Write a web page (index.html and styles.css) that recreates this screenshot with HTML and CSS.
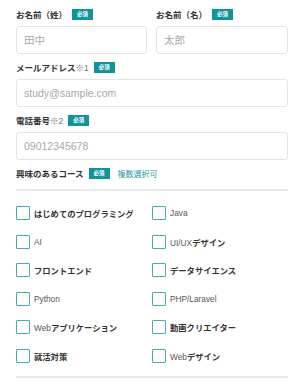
FILE: index.html
```html
<!DOCTYPE html>
<html lang="ja">
<head>
  <meta charset="UTF-8" />
  <meta name="viewport" content="width=device-width, initial-scale=1.0"/>
  <title>お申し込みフォーム</title>
  <link rel="stylesheet" href="styles.css">
</head>
<body>

  <form class="entry">
    <div class="name-row">
      <div class="field">
        <div class="label">お名前（姓）<span class="req">必須</span></div>
        <input type="text" placeholder="田中">
      </div>
      <div class="field">
        <div class="label">お名前（名）<span class="req">必須</span></div>
        <input type="text" placeholder="太郎">
      </div>
    </div>

    <div class="field">
      <div class="label">メールアドレス<span class="note">※1</span><span class="req">必須</span></div>
      <input type="email" placeholder="study@sample.com">
    </div>

    <div class="field">
      <div class="label">電話番号<span class="note">※2</span><span class="req">必須</span></div>
      <input type="tel" placeholder="09012345678">
    </div>

    <div class="label course-label">興味のあるコース<span class="req">必須</span><span class="multi">複数選択可</span></div>
    <hr>

    <div class="courses">
      <label class="jp"><input type="checkbox"><span>はじめてのプログラミング</span></label>
      <label class="en"><input type="checkbox"><span>Java</span></label>
      <label class="en"><input type="checkbox"><span>AI</span></label>
      <label class="jp"><input type="checkbox"><span><i>UI/UX</i>デザイン</span></label>
      <label class="jp"><input type="checkbox"><span>フロントエンド</span></label>
      <label class="jp"><input type="checkbox"><span>データサイエンス</span></label>
      <label class="en"><input type="checkbox"><span>Python</span></label>
      <label class="en"><input type="checkbox"><span>PHP/Laravel</span></label>
      <label class="jp"><input type="checkbox"><span><i>Web</i>アプリケーション</span></label>
      <label class="jp"><input type="checkbox"><span>動画クリエイター</span></label>
      <label class="jp"><input type="checkbox"><span>就活対策</span></label>
      <label class="jp"><input type="checkbox"><span><i>Web</i>デザイン</span></label>
    </div>
    <hr>
  </form>

</body>
</html>
```

FILE: styles.css
```css
* { margin: 0; padding: 0; box-sizing: border-box; }
body { font-family: "Liberation Sans", "Noto Sans CJK JP", sans-serif; background: #fff; color: #333; }
.entry { padding: 8px 12px 0 16px; }
.name-row { display: grid; grid-template-columns: 131px 1fr; gap: 9px; }
.field { margin-bottom: 7px; }
.label { display: flex; align-items: center; height: 12px; margin-bottom: 6px; font-size: 8.5px; font-weight: bold; color: #333; }
.note { font-weight: normal; color: #777; font-size: 8.5px; }
.req { display: inline-block; width: 21px; height: 11px; line-height: 11px; margin-left: 5px; background: #10939b; color: #fff; font-size: 5.5px; text-align: center; }
.multi { margin-left: 8px; color: #2a98a3; font-weight: normal; font-size: 8px; }
.field input { display: block; width: 100%; height: 28px; padding: 0 7px; border: 1.5px solid #e4e4e4; border-radius: 3px; font-family: inherit; font-size: 10.5px; color: #333; outline: none; }
.field input::placeholder { color: #a8a8a8; }
.course-label { margin-bottom: 10px; }
hr { border: none; border-top: 2px solid #e9e9e9; }
.courses { display: grid; grid-template-columns: 136px 1fr; grid-auto-rows: 14px; row-gap: 14.5px; margin: 15px 0 13px; }
.courses label { display: flex; align-items: center; gap: 4px; font-size: 8.3px; color: #333; }
.courses label.jp { font-weight: bold; }
.courses label.en { color: #555; }
.courses label i { font-style: normal; font-weight: normal; color: #555; }
.courses input { appearance: none; width: 14px; height: 14px; border: 1.5px solid #45a9b0; border-radius: 1px; background: #fff; flex: none; }
```
